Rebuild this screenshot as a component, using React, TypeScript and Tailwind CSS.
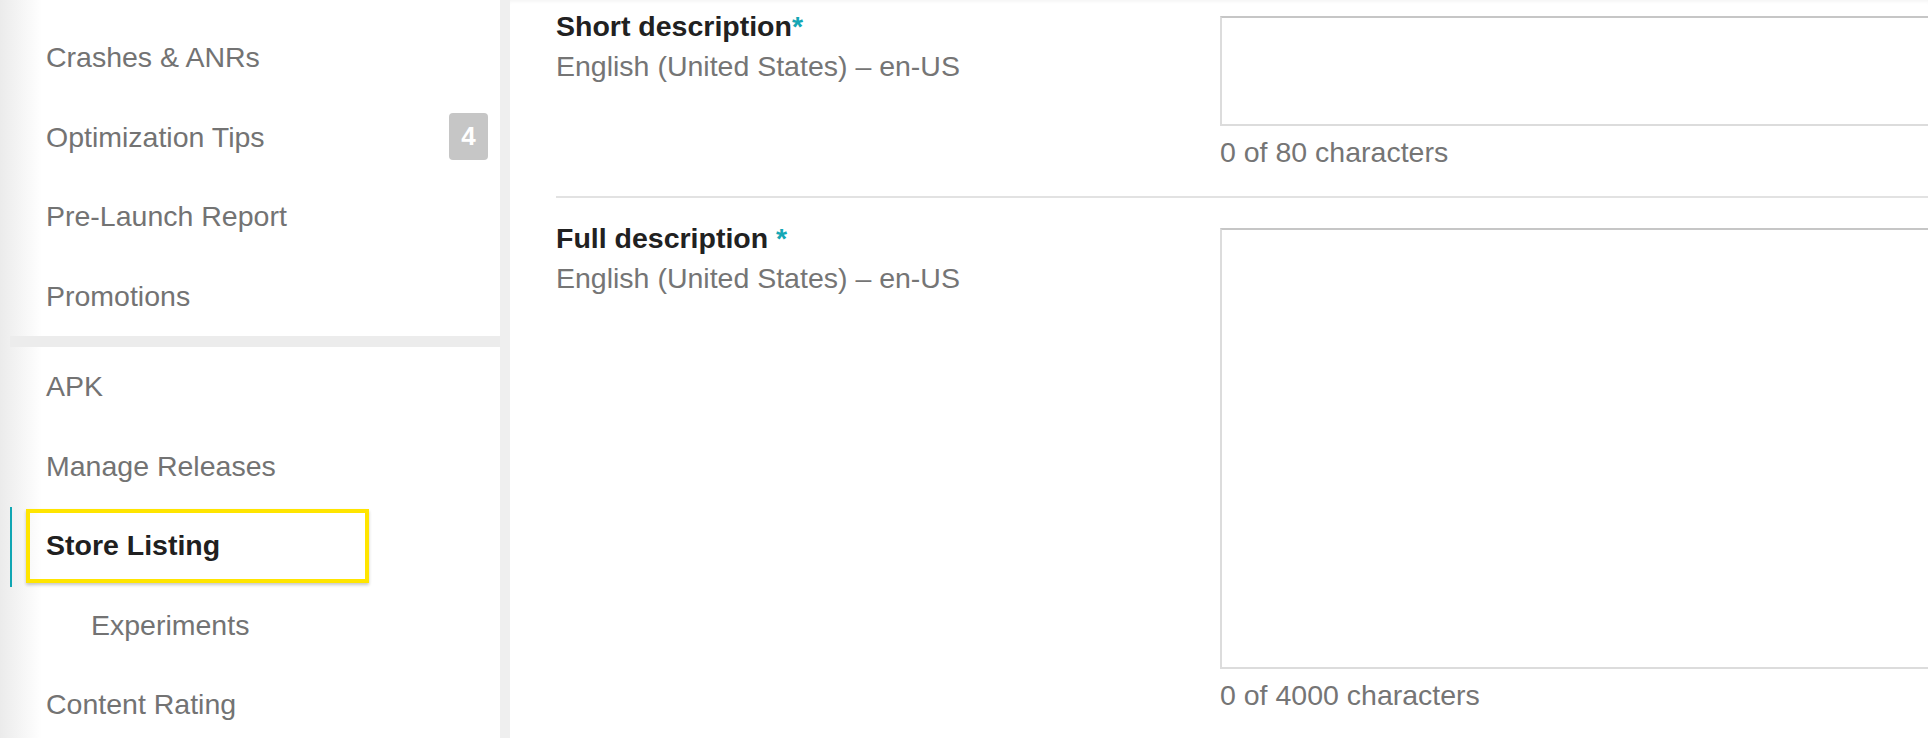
const navTop = [
  { label: "Crashes & ANRs" },
  { label: "Optimization Tips", badge: "4" },
  { label: "Pre-Launch Report" },
  { label: "Promotions" },
];

const navBottom = [
  { label: "APK" },
  { label: "Manage Releases" },
  { label: "Store Listing", active: true },
  { label: "Experiments", sub: true },
  { label: "Content Rating" },
];

type NavItem = { label: string; badge?: string; active?: boolean; sub?: boolean };

function NavRow({ item }: { item: NavItem }) {
  return (
    <div className="relative flex h-[79.5px] items-center justify-between pr-[12px]">
      {item.active && (
        <>
          <div className="absolute left-[10px] top-[1px] h-[80px] w-[2px] bg-[#10a6b3]" />
          <div className="absolute left-[26px] top-[3px] h-[74px] w-[343px] border-4 border-[#ffe500] shadow-[0_2px_3px_rgba(0,0,0,0.22)]" />
        </>
      )}
      <span
        className={
          (item.sub ? "pl-[91px] " : "pl-[46px] ") +
          (item.active ? "font-bold text-[#202020]" : "text-[#737373]") +
          " relative text-[28.5px] leading-[32px]"
        }
      >
        {item.label}
      </span>
      {item.badge && (
        <span className="flex h-[47px] w-[39px] items-center justify-center rounded-[4px] bg-[#c6c6c6] text-[26px] font-bold text-white">
          {item.badge}
        </span>
      )}
    </div>
  );
}

function Field({
  title,
  spaced,
  boxHeight,
  max,
}: {
  title: string;
  spaced?: boolean;
  boxHeight: string;
  max: number;
}) {
  return (
    <div className="grid grid-cols-[664px_1fr]">
      <div className="text-[28.5px] leading-[40px]">
        <div className="font-bold text-[#212121]">
          {title}
          {spaced ? " " : ""}
          <span className="text-[#14a7b5]">*</span>
        </div>
        <div className="text-[#757575]">English (United States) – en-US</div>
      </div>
      <div className="mt-[10px]">
        <div
          className={
            boxHeight +
            " w-[820px] border-2 border-[#dcdcdc] border-t-[#c6c6c6] bg-white"
          }
        />
        <div className="mt-[6px] text-[28.5px] leading-[40px] text-[#757575]">
          0 of {max} characters
        </div>
      </div>
    </div>
  );
}

export default function App() {
  return (
    <div
      className="flex h-[738px] w-[1928px] overflow-hidden bg-white"
      style={{ fontFamily: '"Liberation Sans", Arial, sans-serif' }}
    >
      <aside className="w-[500px] shrink-0 bg-[linear-gradient(to_right,#ebebeb,#ffffff_42px)] pt-[17.5px]">
        {navTop.map((item) => (
          <NavRow key={item.label} item={item} />
        ))}
        <div className="ml-[10px] h-[11px] bg-[#ececec]" />
        {navBottom.map((item) => (
          <NavRow key={item.label} item={item} />
        ))}
      </aside>
      <div className="w-[10px] shrink-0 bg-[#efefef]" />
      <main className="flex-1 overflow-hidden pl-[46px] pt-[6px] shadow-[inset_0_4px_4px_-3px_rgba(0,0,0,0.06)]">
        <div className="pb-[24px]">
          <Field title="Short description" boxHeight="h-[110px]" max={80} />
        </div>
        <div className="h-[2px] bg-[#e2e2e2]" />
        <div className="pt-[20px]">
          <Field title="Full description" spaced boxHeight="h-[441px]" max={4000} />
        </div>
      </main>
    </div>
  );
}
